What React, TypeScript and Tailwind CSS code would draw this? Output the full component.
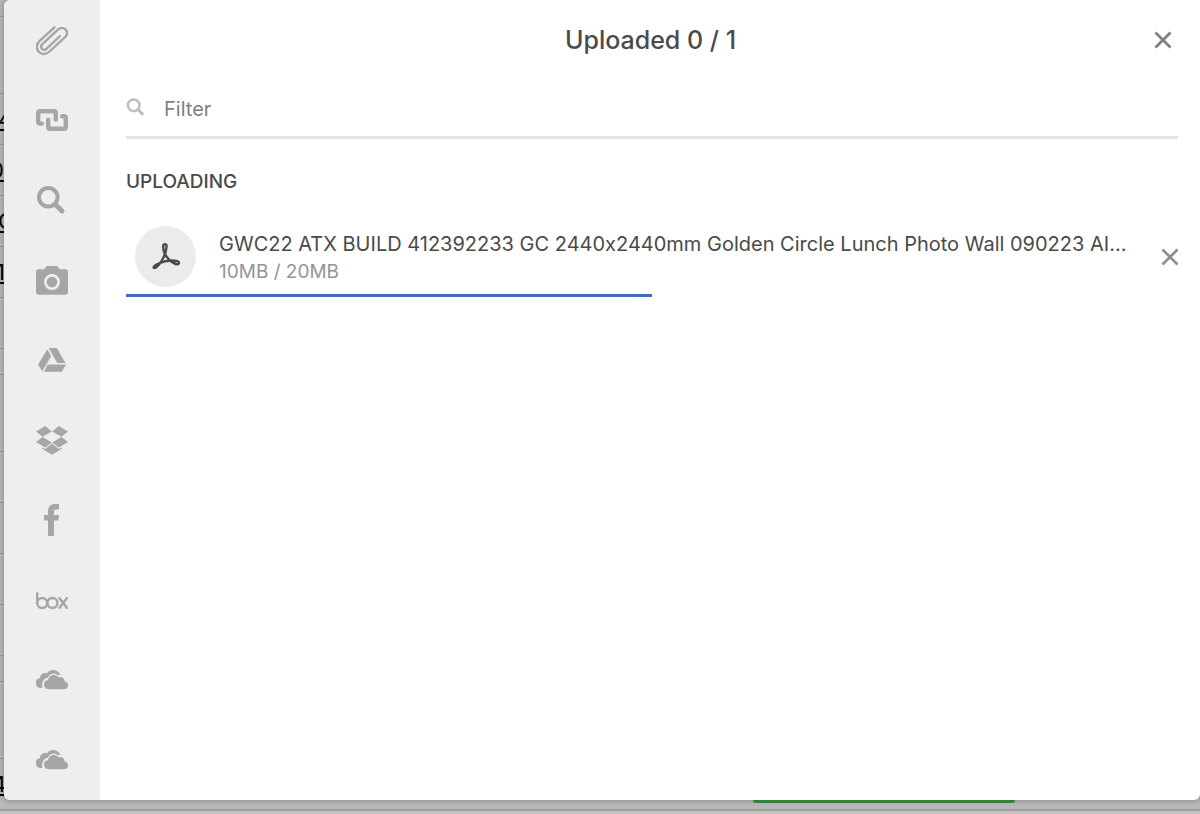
import { ReactNode } from 'react';

interface IconProps {
  className?: string;
  children?: ReactNode;
}

function Icon({ className = 'size-8', children }: IconProps) {
  return (
    <svg
      xmlns="http://www.w3.org/2000/svg"
      className={className}
      viewBox="0 0 32 32"
      fill="currentColor"
      aria-hidden="true"
    >
      {children}
    </svg>
  );
}

function PaperclipIcon() {
  return (
    <Icon>
      <path
        d="M18.4 3.3 3.4 17.2C-.3 20.8.3 25.4 3 28c2.8 2.7 7.3 2.7 10.6-.5L29.3 12.9c2.3-2.3 2.1-5.4.3-7.3-2-2-5.3-2.200-7.7.1L6.4 20.2c-1.6 1.6-1.5 3.4-.4 4.6 1.2 1.2 3.1 1.3 4.7-.2L24 12"
        fill="none"
        stroke="currentColor"
        strokeWidth="2.4"
        strokeLinecap="round"
      />
    </Icon>
  );
}

function LinkIcon() {
  return (
    <Icon>
      <g
        fill="none"
        stroke="currentColor"
        strokeWidth="4.4"
        strokeLinecap="round"
        strokeLinejoin="round"
      >
        <path d="M5.8 19.6H4.2Q2.2 19.6 2.2 17.6V9.2Q2.2 7.2 4.2 7.2H17.8Q19.8 7.2 19.8 9.2V15.6" />
        <path d="M12.2 15.6V22.7Q12.2 24.7 14.2 24.7H27.8Q29.8 24.7 29.8 22.7V14.3Q29.8 12.3 27.8 12.3H26.2" />
      </g>
    </Icon>
  );
}

function SearchIcon({ className }: IconProps) {
  return (
    <Icon className={className}>
      <circle cx="12.3" cy="13.3" r="9.3" fill="none" stroke="currentColor" strokeWidth="4" />
      <path d="m19.5 20.5 6.5 6.5" stroke="currentColor" strokeWidth="5" strokeLinecap="round" />
    </Icon>
  );
}

function CameraIcon() {
  return (
    <Icon>
      <path
        fillRule="evenodd"
        d="M3 5.3h4.800c1.7 0 1.3-3.3 4-3.3h8.4c2.7 0 2.3 3.3 4 3.3H29a3 3 0 0 1 3 3v19.4a3 3 0 0 1-3 3H3a3 3 0 0 1-3-3V8.3a3 3 0 0 1 3-3ZM16 10a8 8 0 1 0 0 16 8 8 0 0 0 0-16Z"
      />
      <circle cx="16" cy="18" r="5.3" />
    </Icon>
  );
}

function DriveIcon() {
  return (
    <Icon>
      <path d="m11.4 5.4 3.8 6.5L6.2 27.5 2 20.5ZM12.6 4h8.2l8.7 14.9h-8.2ZM11.5 20.4H30l-4.2 7.4H8.1Z" />
    </Icon>
  );
}

function DropboxIcon() {
  return (
    <Icon>
      <path d="m9.2 2 6.6 5.4-9.2 5.3L0 7.6ZM22.8 2 32 7.6l-6.6 5.1-9.2-5.3ZM6.6 12.9l9.2 5.5L9.2 23.6 0 17.9ZM25.4 12.9l6.6 5-9.2 5.7-6.6-5.2ZM16 19.6l6.8 5.4 2.7-1.6v1.5L16 30.8l-9.5-5.9v-1.5L9.2 25Z" />
    </Icon>
  );
}

function FacebookIcon() {
  return (
    <Icon>
      <path d="M12 32V16.5H8V11h4V7.8C12 2.6 14.4 0 19 0h4v5.5h-2.5c-2.2 0-2.5.8-2.5 2.5v3h5l-.6 5.5H18V32Z" />
    </Icon>
  );
}

function BoxIcon() {
  return (
    <Icon>
      <g fill="none" stroke="currentColor" strokeWidth="2.4" strokeLinecap="round">
        <path d="M1.2 9.3V19" />
        <circle cx="6.2" cy="19" r="5" />
        <circle cx="16.4" cy="19" r="5" />
        <path d="m23.5 14.2 7.3 9.6M30.8 14.2l-7.3 9.6" />
      </g>
    </Icon>
  );
}

function CloudsIcon() {
  return (
    <Icon>
      <path d="M6.4 23.9H5A5 5 0 0 1 3.9 14C4.2 10.3 7.5 8.2 11 9.2 14.5 4.5 22 5.2 24.2 11c-1.2-.1-1.8 0-2.5.2-3.2-2.9-8.2-1.9-9.9 2.6-4.3.6-6.8 5.2-5.4 10.1Z" />
      <path d="M12.4 25.2c-5.9-.3-6.1-8.7-.2-9.2.4-5.2 7.4-6.7 10.1-2.7 3.3-1 6.5 1 6.3 4.3 4.7.3 4.5 7.4-.2 7.6Z" />
    </Icon>
  );
}

function AcrobatIcon() {
  return (
    <Icon>
      <path
        d="M15 3.2C12.6 3.2 12.8 7 14 10.5 16 16.5 21 21.5 25.5 23c4 1.2 5-2.2 1-3-5.5-1-13.5.5-18 2.5-5.5 2.3-5.5 4.5-4 4.5 3.5 0 10-10.5 11.3-17C16.8 5.5 17 3.2 15 3.2Z"
        fill="none"
        stroke="currentColor"
        strokeWidth="2.4"
      />
    </Icon>
  );
}

function CloseIcon() {
  return (
    <Icon className="size-5">
      <path d="m4 4 24 24M28 4 4 28" stroke="currentColor" strokeWidth="4.4" />
    </Icon>
  );
}

const sources = [
  { name: 'My Device', icon: <PaperclipIcon /> },
  { name: 'Link (URL)', icon: <LinkIcon /> },
  { name: 'Web Search', icon: <SearchIcon /> },
  { name: 'Take Photo', icon: <CameraIcon /> },
  { name: 'Google Drive', icon: <DriveIcon /> },
  { name: 'Dropbox', icon: <DropboxIcon /> },
  { name: 'Facebook', icon: <FacebookIcon /> },
  { name: 'Box', icon: <BoxIcon /> },
  { name: 'OneDrive', icon: <CloudsIcon /> },
  { name: 'OneDrive for Business', icon: <CloudsIcon /> },
];

const backdropRows = [
  { size: 'h-[17px]' },
  { size: 'h-[77px]' },
  { size: 'h-[51px]', code: '4', shift: '-ml-0.5' },
  { size: 'h-[51px]', code: '0', shift: '-ml-2.5' },
  { size: 'h-[51px]', code: 'C', shift: '-ml-0.5' },
  { size: 'h-[51px]', code: '1', shift: '-ml-1' },
  { size: 'h-[51px]' },
  { size: 'h-[26px]' },
  { size: 'h-[77px]' },
  { size: 'h-[51px]' },
  { size: 'h-[51px]' },
  { size: 'h-[51px]' },
  { size: 'h-[51px]' },
  { size: 'h-[26px]' },
  { size: 'h-[77px]' },
  { size: 'h-[51px]', code: '4', shift: '-ml-2' },
];

const upload = {
  name: 'GWC22 ATX BUILD 412392233 GC 2440x2440mm Golden Circle Lunch Photo Wall 090223 AIW.pdf',
  loaded: 10,
  total: 20,
};

// The dimmed page that the picker opens over
function Backdrop() {
  return (
    <div className="absolute inset-0 overflow-hidden bg-[#b9b9b9]" aria-hidden="true">
      {backdropRows.map((row, i) => (
        <div
          key={i}
          className={`flex items-center border-b border-[#9c9c9c] ${row.size}`}
        >
          {row.code && (
            <a
              href="#"
              tabIndex={-1}
              className={`text-[22px] leading-6 text-black underline decoration-2 underline-offset-2 ${row.shift}`}
            >
              {row.code}
            </a>
          )}
        </div>
      ))}
    </div>
  );
}

export default function App() {
  const percent = (upload.loaded / upload.total) * 100;

  return (
    <div className="relative flex min-h-screen flex-col overflow-hidden pl-1 font-['Inter','Liberation_Sans',sans-serif] text-[#4a4a4a] [font-feature-settings:'calt'_0]">
      <Backdrop />
      <div
        className="relative flex flex-1 rounded-b-md rounded-tl-md bg-white shadow-[0_0_4px_2px_rgba(0,0,0,0.18)]"
        role="dialog"
        aria-modal="true"
        aria-label="Upload files"
      >
        <nav className="flex w-24 shrink-0 flex-col rounded-l-md bg-[#eeeeee]">
          {sources.map((source) => (
            <button
              key={source.name}
              type="button"
              aria-label={source.name}
              className="flex h-20 items-center justify-center text-[#a6a6a6]"
            >
              {source.icon}
            </button>
          ))}
        </nav>

        <div className="flex min-w-0 flex-1 flex-col">
          <header className="flex h-20 items-center pr-[27px] pl-12">
            <h1 className="flex-1 text-center text-[25px] leading-8 font-medium">
              Uploaded 0 / 1
            </h1>
            <button type="button" aria-label="Close" className="text-[#7f7f7f]">
              <CloseIcon />
            </button>
          </header>

          <main className="pr-[22px] pl-[26px]">
            <label className="flex h-[59px] items-start gap-[18px] border-b-[3px] border-[#e3e3e3] pt-[17px] text-[#bdbdbd]">
              <SearchIcon className="size-5" />
              <input
                type="text"
                placeholder="Filter"
                aria-label="Filter"
                className="h-6 min-w-0 flex-1 text-xl leading-6 text-[#4a4a4a] outline-none placeholder:text-[#7f7f7f]"
              />
            </label>

            <h2 className="mt-7 text-[19px] leading-[30px] font-medium">UPLOADING</h2>

            <div className="mt-[29px] flex h-[68px] gap-[23px]">
              <div className="ml-[9px] flex size-[61px] shrink-0 items-center justify-center rounded-full bg-[#ebebeb] text-[#4a4a4a]">
                <AcrobatIcon />
              </div>
              <div className="min-w-0 flex-1 pt-1">
                <p className="truncate text-xl leading-7">{upload.name}</p>
                <p className="text-[19px] leading-7 text-[#949494]">
                  {upload.loaded}MB / {upload.total}MB
                </p>
              </div>
              <button
                type="button"
                aria-label="Cancel upload"
                className="-mr-0.5 -ml-1 flex h-[61px] items-center text-[#8f8f8f]"
              >
                <CloseIcon />
              </button>
            </div>
            <div className="h-[3px] bg-[#3b69d8]" style={{ width: `${percent}%` }} />
          </main>
        </div>
      </div>

      <div className="relative flex h-3.5 flex-col justify-between">
        <div className="ml-[62.6%] h-[3px] w-[262px] rounded-b-md bg-[#278a31]" />
        <div className="-ml-1 h-1 border-t border-[#9c9c9c] bg-[#c3c3c3]" />
      </div>
    </div>
  );
}
